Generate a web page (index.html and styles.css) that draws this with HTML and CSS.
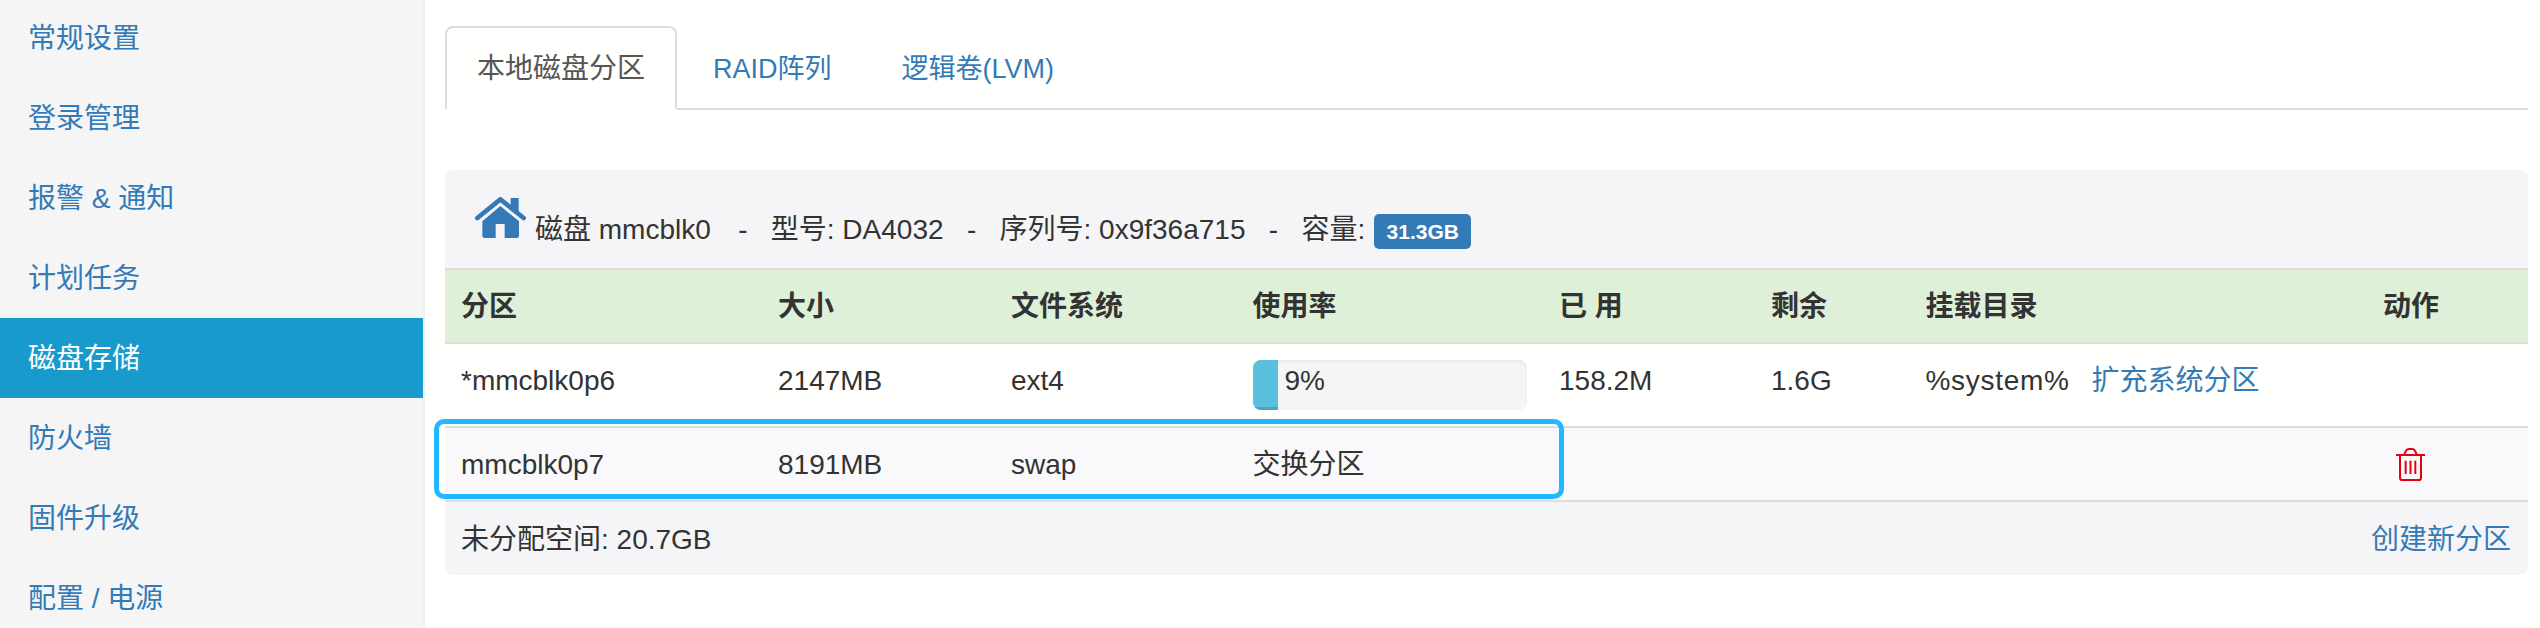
FILE: index.html
```html
<!DOCTYPE html>
<html lang="zh-CN">
<head>
<meta charset="utf-8">
<title>磁盘存储</title>
<link rel="stylesheet" href="styles.css">
</head>
<body>
<div class="page">
  <nav class="sidebar">
    <ul class="menu">
      <li><a href="#">常规设置</a></li>
      <li><a href="#">登录管理</a></li>
      <li><a href="#">报警 &amp; 通知</a></li>
      <li><a href="#">计划任务</a></li>
      <li class="active"><a href="#">磁盘存储</a></li>
      <li><a href="#">防火墙</a></li>
      <li><a href="#">固件升级</a></li>
      <li><a href="#">配置 / 电源</a></li>
    </ul>
  </nav>
  <main class="content">
    <ul class="tabs">
      <li class="tab current"><a href="#">本地磁盘分区</a></li>
      <li class="tab"><a href="#">RAID阵列</a></li>
      <li class="tab"><a href="#">逻辑卷(LVM)</a></li>
    </ul>
    <section class="panel">
      <div class="panel-heading">
        <svg class="home" viewBox="0 0 151 123" aria-hidden="true">
          <path class="home-fill" d="M106 3h24v46l-24-20z"/>
          <path class="home-roof" d="M6 63 75 7l70 56"/>
          <path class="home-fill" fill-rule="evenodd" d="M75 27l56 46v44q0 6-6 6H27q-6 0-6-6V73zM61 81v42h27V81z"/>
        </svg>
        <div class="disk-title">磁盘 mmcblk0<span class="first-sep">&nbsp;&nbsp;&nbsp;-&nbsp;&nbsp;&nbsp;</span>型号: DA4032&nbsp;&nbsp;&nbsp;-&nbsp;&nbsp;&nbsp;序列号: 0x9f36a715&nbsp;&nbsp;&nbsp;-&nbsp;&nbsp;&nbsp;容量:<span class="badge">31.3GB</span></div>
      </div>
      <table class="parts">
        <colgroup>
          <col class="c1"><col class="c2"><col class="c3"><col class="c4"><col class="c5"><col class="c6"><col class="c7"><col class="c8">
        </colgroup>
        <thead>
          <tr><th>分区</th><th>大小</th><th>文件系统</th><th>使用率</th><th>已 用</th><th>剩余</th><th>挂载目录</th><th>动作</th></tr>
        </thead>
        <tbody>
          <tr>
            <td>*mmcblk0p6</td><td>2147MB</td><td>ext4</td>
            <td class="usage"><div class="progress"><div class="progress-bar"></div><span class="progress-label">9%</span></div></td>
            <td>158.2M</td><td>1.6G</td>
            <td><span class="mount">%system%</span><a class="expand" href="#">扩充系统分区</a></td><td></td>
          </tr>
          <tr class="alt">
            <td>mmcblk0p7</td><td>8191MB</td><td>swap</td><td>交换分区</td><td></td><td></td><td></td>
            <td class="action">
              <svg class="trash" viewBox="0 0 87 99" aria-hidden="true">
                <path d="M0 21h87M24 21l5-11q3-7 9-7h11q6 0 9 7l5 11M12 21v68q0 7 7 7h49q7 0 7-7V21"/>
                <path d="M29 38v40M43.500 38v40M58 38v40"/>
              </svg>
            </td>
          </tr>
        </tbody>
      </table>
      <div class="panel-footer">
        <span>未分配空间: 20.7GB</span>
        <a href="#">创建新分区</a>
      </div>
      <div class="highlight"></div>
    </section>
  </main>
</div>
</body>
</html>
```
FILE: styles.css
```css
* { box-sizing: border-box; }
html, body { margin: 0; height: 100%; }
body {
  background: #fffffd;
  color: #333;
  font-family: "Liberation Sans", "Noto Sans CJK SC", sans-serif;
  font-size: 28px;
  line-height: 40px;
  overflow: hidden;
}
a { color: #337ab7; text-decoration: none; }
ul { list-style: none; margin: 0; padding: 0; }

.page { display: flex; height: 628px; overflow: hidden; }

.sidebar {
  flex: 0 0 425px;
  background: #f5f5f5;
  border-right: 2px solid #f0f0f0;
}
.menu { margin-top: -2px; }
.menu a { display: block; height: 80px; line-height: 82px; padding-left: 28px; }
.menu .active a { background: #189bcc; color: #fff; }

.content { flex: 1; min-width: 0; padding: 26px 12px 0 20px; }

.tabs { display: flex; gap: 4px; border-bottom: 2px solid #ddd; height: 84px; }
.tab a {
  display: block;
  height: 84px;
  padding: 23px 34px 0 32px;
  border-radius: 8px 8px 0 0;
  font-size: 27px;
}
.tab.current a {
  color: #555;
  background: #fffffd;
  border: 2px solid #ddd;
  border-bottom-color: #fffffd;
  padding: 21px 30px 0;
  font-size: 28px;
}

.panel {
  position: relative;
  margin-top: 60px;
  background: #f5f5f7;
  border-radius: 8px;
}
.panel-heading {
  display: flex;
  align-items: flex-end;
  gap: 9px;
  height: 100px;
  padding: 0 0 18px 30px;
  border-bottom: 2px solid #ddd;
}
.home { width: 51px; height: 41px; margin-bottom: 12px; flex: none; }
.home-fill { fill: #337ab7; }
.home-roof { fill: none; stroke: #337ab7; stroke-width: 14; stroke-linecap: round; }
.first-sep { margin-left: 4px; }
.badge {
  display: inline-block;
  width: 97px;
  height: 35px;
  margin-left: 9px;
  border-radius: 5px;
  background: #337ab7;
  color: #fff;
  font-size: 21px;
  font-weight: 700;
  line-height: 35px;
  text-align: center;
  vertical-align: 0;
}

.parts { width: 100%; table-layout: fixed; border-collapse: separate; border-spacing: 0; }
.c1 { width: 316px; }
.c2 { width: 233px; }
.c3 { width: 241.5px; }
.c4 { width: 306.5px; }
.c5 { width: 212px; }
.c6 { width: 154.5px; }
.c7 { width: 457.5px; }
.c8 { width: 162px; }
.parts th, .parts td {
  padding: 17px 0 15px 17px;
  text-align: left;
  vertical-align: top;
  border-bottom: 2px solid #ddd;
}
.parts th:first-child, .parts td:first-child { padding-left: 16px; }
.parts th { background: #dff0d8; font-weight: 700; height: 74px; }
.parts td { background: #fffffd; height: 84px; }
.parts .alt td { background: #f9f9fb; height: 74px; }
.parts .usage { padding-top: 16px; }
.parts .action { padding: 20px 0 0 30px; }

.progress {
  display: flex;
  width: 274px;
  height: 50px;
  background: #f5f5f5;
  border-radius: 8px;
  overflow: hidden;
  box-shadow: inset 0 2px 3px rgba(0, 0, 0, .06);
}
.progress-bar { width: 25px; background: #5bc0de; box-shadow: inset 0 -3px 0 rgba(0, 0, 0, .15); }
.progress-label { margin: 1px 0 0 7px; }
.mount { letter-spacing: .7px; }
.expand { margin-left: 22px; }

.trash { display: block; width: 29px; height: 33px; fill: none; stroke: #e60012; stroke-width: 6; stroke-linejoin: round; }

.panel-footer {
  display: flex;
  justify-content: space-between;
  align-items: center;
  height: 73px;
  padding: 2px 17px 0 16px;
}

.highlight {
  position: absolute;
  left: -11px;
  top: 249px;
  width: 1130px;
  height: 80px;
  border: 5px solid #22b8ff;
  border-radius: 10px;
}
```
